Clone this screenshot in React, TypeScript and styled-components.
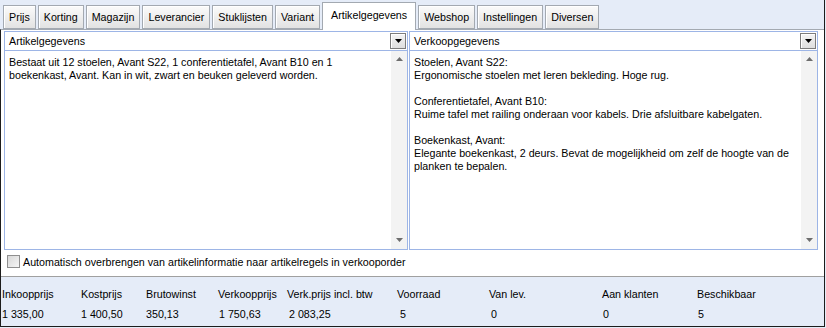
import styled, { createGlobalStyle } from 'styled-components'

const tabs = [
  'Prijs',
  'Korting',
  'Magazijn',
  'Leverancier',
  'Stuklijsten',
  'Variant',
  'Artikelgegevens',
  'Webshop',
  'Instellingen',
  'Diversen',
]

const stats = [
  { label: 'Inkoopprijs', value: '1 335,00', indent: 0 },
  { label: 'Kostprijs', value: '1 400,50', indent: 0 },
  { label: 'Brutowinst', value: '350,13', indent: 0 },
  { label: 'Verkoopprijs', value: '1 750,63', indent: 1 },
  { label: 'Verk.prijs incl. btw', value: '2 083,25', indent: 2 },
  { label: 'Voorraad', value: '5', indent: 3 },
  { label: 'Van lev.', value: '0', indent: 2 },
  { label: 'Aan klanten', value: '0', indent: 1 },
  { label: 'Beschikbaar', value: '5', indent: 1 },
]

function ScrollBar() {
  return (
    <Scroll>
      <svg width="7" height="4" viewBox="0 0 7 4">
        <path d="M0 4 L3.5 0 L7 4 Z" fill="#6d6d6d" />
      </svg>
      <svg width="7" height="4" viewBox="0 0 7 4">
        <path d="M0 0 L3.5 4 L7 0 Z" fill="#6d6d6d" />
      </svg>
    </Scroll>
  )
}

function Combo({ label }: { label: string }) {
  return (
    <ComboRow>
      <span>{label}</span>
      <DropButton>
        <svg width="7" height="4" viewBox="0 0 7 4">
          <path d="M0 0 L3.5 4 L7 0 Z" fill="#000" />
        </svg>
      </DropButton>
    </ComboRow>
  )
}

export default function App() {
  return (
    <>
      <GlobalStyle />
      <Window>
        <TabBar>
          {tabs.map(t => (
            <Tab key={t} $active={t === 'Artikelgegevens'}>
              {t}
            </Tab>
          ))}
        </TabBar>
        <Body>
          <Content>
            <Panels>
              <Panel $width="404px">
                <Combo label="Artikelgegevens" />
                <TextArea>
                  <Text>
                    Bestaat uit 12 stoelen, Avant S22, 1 conferentietafel, Avant B10 en 1
                    <br />
                    boekenkast, Avant. Kan in wit, zwart en beuken geleverd worden.
                  </Text>
                  <ScrollBar />
                </TextArea>
              </Panel>
              <Panel $width="409px">
                <Combo label="Verkoopgegevens" />
                <TextArea>
                  <Text>
                    Stoelen, Avant S22:
                    <br />
                    Ergonomische stoelen met leren bekleding. Hoge rug.
                    <br />
                    <br />
                    Conferentietafel, Avant B10:
                    <br />
                    Ruime tafel met railing onderaan voor kabels. Drie afsluitbare kabelgaten.
                    <br />
                    <br />
                    Boekenkast, Avant:
                    <br />
                    Elegante boekenkast, 2 deurs. Bevat de mogelijkheid om zelf de hoogte van de
                    <br />
                    planken te bepalen.
                  </Text>
                  <ScrollBar />
                </TextArea>
              </Panel>
            </Panels>
            <CheckRow>
              <CheckBox />
              <span>Automatisch overbrengen van artikelinformatie naar artikelregels in verkooporder</span>
            </CheckRow>
          </Content>
          <Footer>
            {stats.map(s => (
              <Label key={s.label}>{s.label}</Label>
            ))}
            {stats.map(s => (
              <Value key={s.label} $indent={s.indent}>
                {s.value}
              </Value>
            ))}
          </Footer>
        </Body>
      </Window>
    </>
  )
}

// ----- STYLES -----

const GlobalStyle = createGlobalStyle`
  html, body {
    margin: 0;
    padding: 0;
    background: #e5ecf8;
  }
  body {
    font-family: "Liberation Sans", Arial, sans-serif;
    font-size: 10.7px;
    color: #000;
  }
  * {
    box-sizing: border-box;
  }
`

const Window = styled.div`
  width: 825px;
  height: 327px;
  background: #e5ecf8;
  border-right: 1px solid #1c1c1c;
  display: flex;
  flex-direction: column;
`

const TabBar = styled.div`
  height: 29px;
  display: flex;
  align-items: flex-end;
  gap: 2px;
  padding-left: 3px;
`

const Tab = styled.div<{ $active: boolean }>`
  height: ${({ $active }) => ($active ? '28px' : '24px')};
  padding: ${({ $active }) => ($active ? '0 8px 3px' : '0 5px')};
  margin-bottom: ${({ $active }) => ($active ? '-1px' : '0')};
  display: flex;
  align-items: center;
  border: 1px solid #a3a9b1;
  border-bottom: ${({ $active }) => ($active ? 'none' : '1px solid #a3a9b1')};
  box-shadow: ${({ $active }) => ($active ? 'none' : 'inset 1px 1px 0 #fff')};
  background: ${({ $active }) =>
    $active ? '#fff' : 'linear-gradient(#fbfbfb, #ececec 60%, #e2e2e2)'};
  position: relative;
  z-index: ${({ $active }) => ($active ? 1 : 0)};
  white-space: nowrap;
`

const Body = styled.div`
  flex: 1;
  display: flex;
  flex-direction: column;
  border-top: 1px solid #a3a9b1;
  border-left: 1px solid #1c1c1c;
  border-bottom: 1px solid #1c1c1c;
`

const Content = styled.div`
  background: #fff;
  padding: 1px 6px 0 3px;
  height: 247px;
  border-bottom: 1px solid #a0a0a0;
`

const Panels = styled.div`
  display: flex;
  gap: 1px;
`

const Panel = styled.div<{ $width: string }>`
  width: ${({ $width }) => $width};
  height: 219px;
  border: 1px solid #9db5e6;
  display: flex;
  flex-direction: column;
`

const ComboRow = styled.div`
  height: 19px;
  border-bottom: 1px solid #9db5e6;
  display: flex;
  align-items: center;
  justify-content: space-between;
  padding: 0 1px 0 4px;
`

const DropButton = styled.div`
  width: 16px;
  height: 16px;
  border: 1px solid #7c7c7c;
  background: linear-gradient(#f4f4f4, #dedede);
  box-shadow: inset 1px 1px 0 #fff;
  display: flex;
  align-items: center;
  justify-content: center;
`

const TextArea = styled.div`
  flex: 1;
  display: flex;
  min-height: 0;
`

const Text = styled.div`
  flex: 1;
  padding: 5px 4px;
  line-height: 13px;
  white-space: nowrap;
  overflow: hidden;
`

const Scroll = styled.div`
  width: 16px;
  background: #f3f3f3;
  display: flex;
  flex-direction: column;
  justify-content: space-between;
  align-items: center;
  padding: 6px 0 7px;
`

const CheckRow = styled.div`
  display: flex;
  align-items: center;
  gap: 3px;
  padding: 3px 0 0 3px;
  height: 20px;
`

const CheckBox = styled.div`
  width: 13px;
  height: 13px;
  border: 1px solid #8f8f8f;
  background: linear-gradient(135deg, #d8d8d8, #f6f6f6);
`

const Footer = styled.div`
  flex: 1;
  background: #e5ecf8;
  display: grid;
  grid-template-columns: 79px 65px 72px 69px 110px 92px 113px 95px 1fr;
  grid-template-rows: 13px 13px;
  row-gap: 7px;
  padding: 11px 0 0 1px;
  line-height: 13px;
`

const Label = styled.div`
  white-space: nowrap;
`

const Value = styled.div<{ $indent: number }>`
  padding-left: ${({ $indent }) => $indent}px;
  white-space: nowrap;
`
